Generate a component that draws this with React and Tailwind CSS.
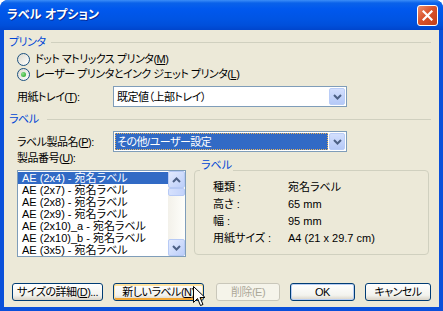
import React from 'react';

const Chevron = ({ up }) => (
    <svg width="9" height="6" viewBox="0 0 9 6">
        <path d={up ? 'M1 5 L4.5 1.5 L8 5' : 'M1 1 L4.5 4.5 L8 1'} fill="none" stroke="#4D6185" strokeWidth="2" />
    </svg>
);

const ScrollBtn = ({ up }) => (
    <div className="flex h-[17px] w-[17px] items-center justify-center rounded-[2px] border border-[#B7CAF5] bg-[linear-gradient(135deg,#E3EBFE,#BCCEF9)]">
        <Chevron up={up} />
    </div>
);

const Combo = ({ children, selected }) => (
    <div className="flex h-[21px] w-[234px] items-stretch border border-[#7F9DB9] bg-white p-[1px]">
        {selected ? (
            <div className="flex flex-1 items-center whitespace-nowrap border border-dotted border-[#E9B45A] bg-[#316AC5] pl-[1px] text-white">{children}</div>
        ) : (
            <div className="flex flex-1 items-center whitespace-nowrap pl-[2px]">{children}</div>
        )}
        <div className="ml-[1px] flex w-[16px] items-center justify-center rounded-[2px] border border-[#BACDF7] bg-[linear-gradient(#D3DFFD,#B5C9F7)]">
            <Chevron />
        </div>
    </div>
);

const Radio = ({ checked }) => (
    <div className="flex h-[13px] w-[13px] shrink-0 items-center justify-center rounded-full border border-[#1C5180] bg-[linear-gradient(135deg,#DCD9CE,#FFFFFF)]">
        {checked && <div className="h-[5px] w-[5px] rounded-full bg-[radial-gradient(circle_at_35%_35%,#8BE08B,#21A121)]" />}
    </div>
);

const GroupHeader = ({ label }) => (
    <div className="flex h-[12px] items-center">
        <span className="min-w-[38px] shrink-0 whitespace-nowrap pr-[5px] text-[#0046D5]">{label}</span>
        <div className="h-px flex-1 bg-[#D0D0BF]" />
    </div>
);

const items = [
    'AE (2x4) - 宛名ラベル',
    'AE (2x7) - 宛名ラベル',
    'AE (2x8) - 宛名ラベル',
    'AE (2x9) - 宛名ラベル',
    'AE (2x10)_a - 宛名ラベル',
    'AE (2x10)_b - 宛名ラベル',
    'AE (3x5) - 宛名ラベル',
];

const details = [
    ['種類 :', '宛名ラベル'],
    ['高さ :', '65 mm'],
    ['幅 :', '95 mm'],
    ['用紙サイズ :', 'A4 (21 x 29.7 cm)'],
];

const App = () => {
    return (
        <div className="relative h-[311px] w-[443px] overflow-hidden bg-white font-['Liberation_Sans','Noto_Sans_CJK_JP',sans-serif] text-[11px] leading-[12px] tracking-[-0.5px] text-black [font-feature-settings:'palt']">
            <div className="flex h-full flex-col overflow-hidden rounded-t-[8px] bg-[#0A50DA]">
                {/* title bar */}
                <div className="flex h-[30px] items-center bg-[linear-gradient(#3C8EF8_0%,#0A62EA_10%,#0058EE_30%,#0054E3_65%,#004FDA_85%,#0045CC_100%)] pl-[7px] pr-[5px]">
                    <span className="whitespace-nowrap text-[12px] font-bold tracking-[0px] text-white [text-shadow:1px_1px_0_#0A2A8F]">ラベル オプション</span>
                    <div className="ml-auto flex h-[21px] w-[21px] items-center justify-center rounded-[3px] border border-white bg-[linear-gradient(135deg,#EE8E6C,#D9532C_45%,#C23E18)]">
                        <svg width="11" height="11" viewBox="0 0 11 11">
                            <path d="M1.5 1.5 L9.5 9.5 M9.5 1.5 L1.5 9.5" stroke="white" strokeWidth="2.2" strokeLinecap="square" />
                        </svg>
                    </div>
                </div>

                {/* body */}
                <div className="mx-[4px] mb-[4px] flex flex-1 flex-col bg-[#ECE9D8] pl-[5px] pr-[8px] pt-[6px]">
                    <GroupHeader label="プリンタ" />
                    <div className="mt-[4px] flex h-[14px] items-center gap-[5px] pl-[8px]">
                        <Radio />
                        <span className="whitespace-nowrap">ドット マトリックス プリンタ(<u>M</u>)</span>
                    </div>
                    <div className="mt-[1px] flex h-[14px] items-center gap-[5px] pl-[8px]">
                        <Radio checked />
                        <span className="whitespace-nowrap">レーザー プリンタとインク ジェット プリンタ(<u>L</u>)</span>
                    </div>
                    <div className="mt-[5px] flex h-[21px] items-center pl-[8px]">
                        <span className="w-[96px] whitespace-nowrap">用紙トレイ(<u>T</u>):</span>
                        <Combo>既定値（上部トレイ）</Combo>
                    </div>

                    <div className="mt-[6px]">
                        <GroupHeader label="ラベル" />
                    </div>
                    <div className="mt-[6px] flex h-[21px] items-center pl-[8px]">
                        <span className="w-[96px] whitespace-nowrap">ラベル製品名(<u>P</u>):</span>
                        <Combo selected>その他/ユーザー設定</Combo>
                    </div>
                    <div className="flex h-[12px] items-center pl-[8px]">
                        <span className="whitespace-nowrap">製品番号(<u>U</u>):</span>
                    </div>

                    <div className="mt-[6px] flex pl-[8px]">
                        {/* list box */}
                        <div className="flex h-[87px] w-[169px] border border-[#7F9DB9] bg-white tracking-normal">
                            <div className="flex-1 overflow-hidden pt-[1px]">
                                {items.map((t, i) => (
                                    <div
                                        key={t}
                                        className={i === 0 ? 'flex h-[12px] items-center whitespace-nowrap bg-[#316AC5] pl-[4px] text-white' : 'flex h-[12px] items-center whitespace-nowrap pl-[4px]'}
                                    >
                                        {t}
                                    </div>
                                ))}
                            </div>
                            <div className="flex w-[17px] flex-col bg-[linear-gradient(90deg,#F3F1EA,#FEFEFB)]">
                                <ScrollBtn up />
                                <div className="h-[8px] w-[17px] rounded-[2px] border border-[#B7CAF5] bg-[linear-gradient(90deg,#D6E1FD,#C3D3FB)]" />
                                <div className="mt-auto">
                                    <ScrollBtn />
                                </div>
                            </div>
                        </div>

                        {/* label group */}
                        <div className="relative ml-[8px] h-[85px] w-[235px] rounded-[4px] border border-[#D0D0BF] pl-[18px] pt-[7px] tracking-normal">
                            <span className="absolute left-[5px] top-[-12px] whitespace-nowrap bg-[#ECE9D8] px-[1px] text-[#0046D5]">ラベル</span>
                            {details.map(([k, v]) => (
                                <div key={k} className="flex h-[17px] items-center whitespace-nowrap">
                                    <span className="w-[75px]">{k}</span>
                                    <span>{v}</span>
                                </div>
                            ))}
                        </div>
                    </div>

                    {/* buttons */}
                    <div className="mt-[26px] flex pl-[3px]">
                        <button className="flex h-[18px] w-[91px] items-center justify-center whitespace-nowrap rounded-[3px] border border-[#003C74] bg-[linear-gradient(#FFFFFF,#F3F3EE_70%,#D8D2C6)]">
                            サイズの詳細(<u>D</u>)...
                        </button>
                        <button className="ml-[10px] flex h-[18px] w-[91px] items-center justify-center whitespace-nowrap rounded-[3px] border border-[#003C74] bg-[linear-gradient(#FFFFFF,#F3F3EE_70%,#D8D2C6)] shadow-[inset_0_1px_0_1px_#FFE2A0,inset_0_-1px_0_1px_#F2A733]">
                            新しいラベル(<u>N</u>)
                        </button>
                        <button className="ml-[12px] flex h-[18px] w-[64px] items-center justify-center whitespace-nowrap rounded-[3px] border border-[#C9C7BA] bg-[#F5F4EA] text-[#ACA899]">
                            削除(E)
                        </button>
                        <button className="ml-[10px] flex h-[18px] w-[65px] items-center justify-center whitespace-nowrap rounded-[3px] border border-[#003C74] bg-[linear-gradient(#FFFFFF,#F3F3EE_70%,#D8D2C6)] shadow-[inset_0_0_0_1px_#B7CDF3]">
                            OK
                        </button>
                        <button className="ml-[10px] flex h-[18px] w-[66px] items-center justify-center whitespace-nowrap rounded-[3px] border border-[#003C74] bg-[linear-gradient(#FFFFFF,#F3F3EE_70%,#D8D2C6)]">
                            キャンセル
                        </button>
                    </div>
                </div>
            </div>

            {/* mouse pointer */}
            <svg className="absolute left-[193px] top-[286px]" width="13" height="21" viewBox="0 0 13 21">
                <path d="M0.5 0.5 L0.5 16.5 L4.5 12.5 L7.5 19.5 L10 18.5 L7 11.5 L12 11.5 Z" fill="white" stroke="black" strokeWidth="1" />
            </svg>
        </div>
    );
};

export default App;
